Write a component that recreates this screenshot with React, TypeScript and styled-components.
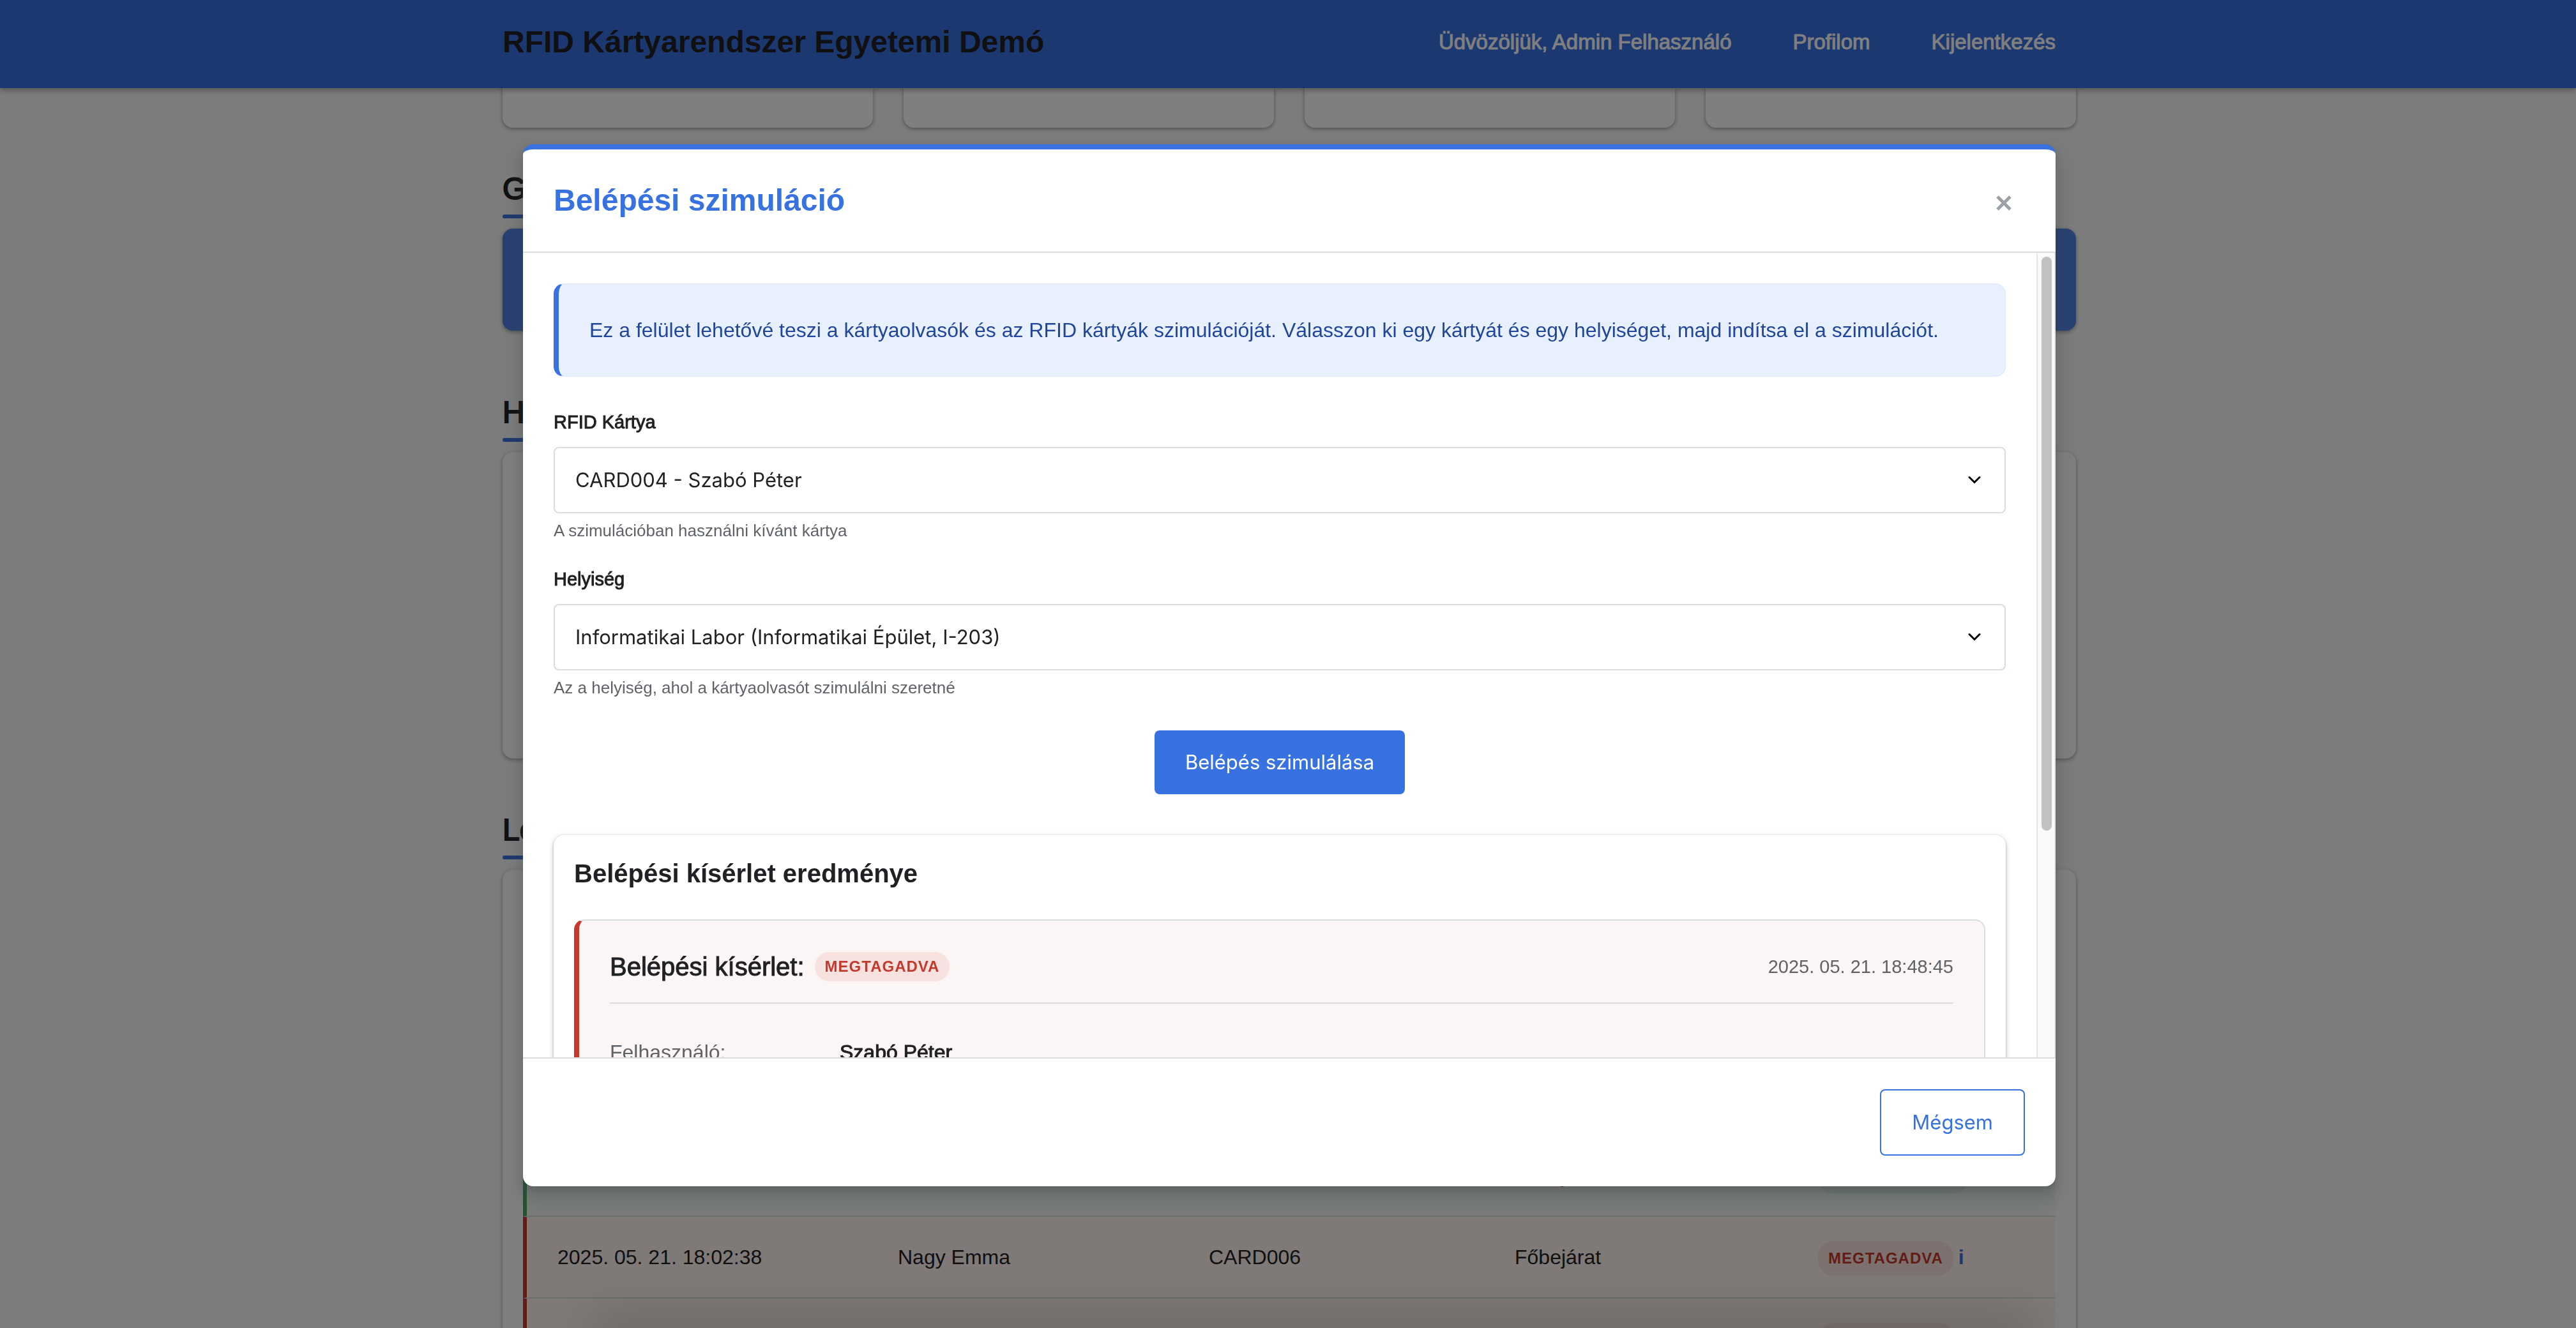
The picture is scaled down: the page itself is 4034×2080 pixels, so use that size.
import React from "react";
import styled, { createGlobalStyle, css } from "styled-components";

const sans = `"Liberation Sans", Arial, sans-serif`;
const ui = `Inter, Roboto, "Liberation Sans", sans-serif`;

const color = {
  primary: "#3871e0",
  text: "#202124",
  muted: "#5f6368",
  line: "#dadce0",
  red: "#c5392c",
  green: "#48a561",
};

const cardShadow = "0 2px 4px rgba(60, 64, 67, 0.3), 0 2px 6px 2px rgba(60, 64, 67, 0.15)";

/* Thickens the regular face to a medium weight. */
const medium = css`
  -webkit-text-stroke: 1px currentColor;
`;

const GlobalStyle = createGlobalStyle`
  *, *::before, *::after { box-sizing: border-box; }
  body {
    margin: 0;
    background: #f8f9fa;
    color: ${color.text};
    font: 32px/48px ${sans};
    overflow: hidden;
  }
  h1, h2, h3, h4, p, dl, dd { margin: 0; }
  button, select { font: inherit; }
`;

const Page = styled.div`
  height: 100vh;
  overflow: hidden;
`;

const Header = styled.header`
  position: relative;
  z-index: 1;
  height: 138px;
  padding: 0 0 6px 4px;
  display: flex;
  align-items: center;
  background: ${color.primary};
  box-shadow: 0 4px 8px rgba(0, 0, 0, 0.3);
`;

const HeaderInner = styled.div`
  flex: 1;
  max-width: 2464px;
  margin: 0 auto;
  padding-right: 32px;
  display: flex;
  align-items: center;
  justify-content: space-between;
`;

const Brand = styled.h1`
  font-size: 48px;
  line-height: 64px;
`;

const Nav = styled.nav`
  display: flex;
  gap: 96px;
  color: #fff;
  font-size: 33px;
  ${medium}
`;

const NavLink = styled.a`
  color: inherit;
  text-decoration: none;
`;

const Container = styled.main`
  padding-left: 4px;
`;

const Column = styled.div`
  max-width: 2464px;
  margin: 0 auto;
`;

const StatGrid = styled.div`
  display: grid;
  grid-template-columns: repeat(4, 1fr);
  gap: 48px;
`;

const StatCard = styled.div`
  height: 62px;
  background: #fff;
  border-radius: 0 0 16px 16px;
  box-shadow: ${cardShadow};
`;

const Section = styled.section<{ $gap: number }>`
  padding-top: ${(p) => p.$gap}px;
`;

const SectionTitle = styled.h2`
  margin-bottom: 16px;
  font-size: 48px;
  font-weight: 400;
  line-height: 64px;
  -webkit-text-stroke: 2px currentColor;

  &::after {
    content: "";
    display: block;
    width: 120px;
    height: 6px;
    margin-top: 8px;
    border-radius: 3px;
    background: ${color.primary};
  }
`;

const Banner = styled.div`
  height: 160px;
  border-radius: 16px;
  background: #4f83e6;
  box-shadow: ${cardShadow};
`;

const Card = styled.div<{ $height?: number }>`
  min-height: ${(p) => p.$height ?? 0}px;
  padding: 32px;
  background: #fff;
  border-radius: 16px;
  box-shadow: ${cardShadow};
`;

const Table = styled.table`
  width: 100%;
  table-layout: fixed;
  border-collapse: separate;
  border-spacing: 0;
`;

const Th = styled.th`
  height: 128px;
  padding: 0 48px;
  text-align: left;
  border-bottom: 2px solid ${color.line};
`;

const Row = styled.tr<{ $denied: boolean }>`
  height: 128px;
  background: ${(p) => (p.$denied ? "#fef2ef" : "#f4faf3")};

  td:first-child {
    border-left: 6px solid ${(p) => (p.$denied ? color.red : color.green)};
  }
`;

const Td = styled.td`
  padding: 0 48px;
  border-bottom: 2px solid ${color.line};
`;

const Status = styled.div`
  display: flex;
  align-items: center;
  gap: 8px;
`;

const Badge = styled.span<{ $denied: boolean; $tall?: boolean }>`
  padding: ${(p) => (p.$tall ? 8 : 4)}px 16px;
  margin-top: ${(p) => (p.$tall ? 4 : 0)}px;
  border-radius: 24px;
  background: ${(p) => (p.$denied ? "#f8e2df" : "#dff0e3")};
  color: ${(p) => (p.$denied ? color.red : color.green)};
  font-size: 24px;
  font-weight: 700;
  line-height: 38px;
  letter-spacing: 1px;
  white-space: nowrap;
`;

const InfoMark = styled.b`
  color: ${color.primary};
`;

const Overlay = styled.div`
  position: fixed;
  inset: 0;
  z-index: 10;
  padding: 4px 0 0 4px;
  display: flex;
  align-items: center;
  justify-content: center;
  background: rgba(0, 0, 0, 0.5);

  &::after {
    content: "";
    position: absolute;
    left: 940px;
    right: 860px;
    bottom: -20px;
    height: 20px;
    box-shadow: 0 0 80px 16px rgba(0, 0, 0, 0.2);
  }
`;

const Dialog = styled.div`
  width: 2400px;
  max-width: 92vw;
  height: calc(100vh - 448px);
  display: flex;
  flex-direction: column;
  overflow: hidden;
  background: #fff;
  border-top: 8px solid ${color.primary};
  border-radius: 16px;
  box-shadow: 0 8px 12px rgba(60, 64, 67, 0.3), 0 16px 24px 12px rgba(60, 64, 67, 0.15);
`;

const DialogHeader = styled.div`
  flex: none;
  padding: 48px;
  display: flex;
  align-items: center;
  justify-content: space-between;
  border-bottom: 2px solid ${color.line};
`;

const DialogTitle = styled.h2`
  color: ${color.primary};
  font-size: 48px;
  line-height: 64px;
`;

const CloseButton = styled.button`
  width: 66px;
  height: 64px;
  padding: 8px 0 0;
  display: grid;
  place-items: center;
  border: 0;
  background: none;
  color: #9aa0a6;
`;

const DialogMain = styled.div`
  flex: 1;
  min-height: 0;
  display: flex;
`;

const DialogBody = styled.div`
  flex: 1;
  min-width: 0;
  padding: 48px;
  overflow-y: auto;
  scrollbar-width: none;
`;

const ScrollTrack = styled.div`
  width: 30px;
  padding: 6px 4px 6px 6px;
  background: #fafafa;
  border: solid #e8e8e8;
  border-width: 0 2px;
`;

const ScrollThumb = styled.div`
  height: 72%;
  border-radius: 8px;
  background: #c1c1c1;
`;

const Notice = styled.p`
  padding: 48px;
  margin-bottom: 48px;
  background: #e8effd;
  border: 1px solid #dbe7fc;
  border-left: 8px solid ${color.primary};
  border-radius: 16px;
  color: #20469b;
`;

const Field = styled.div`
  & + & {
    margin-top: 34px;
  }
`;

const Label = styled.label`
  display: block;
  margin-bottom: 16px;
  font-size: 29px;
  line-height: 46px;
  ${medium}
`;

const SelectBox = styled.div`
  position: relative;
  display: grid;
`;

const Select = styled.select`
  width: 100%;
  height: 104px;
  padding: 0 32px;
  appearance: none;
  background: #fff;
  border: 2px solid ${color.line};
  border-radius: 8px;
  color: ${color.text};
  font-family: ${ui};
  font-size: 31px;
`;

const Chevron = styled.svg`
  position: absolute;
  right: 38px;
  top: 45px;
  pointer-events: none;
`;

const Hint = styled.p`
  margin-top: 8px;
  color: ${color.muted};
  font-size: 26px;
  line-height: 38px;
`;

const Actions = styled.div`
  margin: 48px 0 64px;
  display: flex;
  justify-content: center;
`;

const Button = styled.button<{ $outline?: boolean }>`
  padding: 26px 48px;
  border: ${(p) => (p.$outline ? `2px solid ${color.primary}` : "0")};
  border-radius: 8px;
  background: ${(p) => (p.$outline ? "#fff" : color.primary)};
  color: ${(p) => (p.$outline ? color.primary : "#fff")};
  font-family: ${ui};
  font-size: 31px;
`;

const ResultTitle = styled.h3`
  margin-bottom: 44px;
  font-size: 40px;
  line-height: 56px;
`;

const Attempt = styled.div`
  padding: 48px;
  background: #fbf5f5;
  border: 2px solid ${color.line};
  border-left: 8px solid ${color.red};
  border-radius: 16px;
`;

const AttemptHeader = styled.div`
  padding-bottom: 32px;
  margin-bottom: 48px;
  display: flex;
  align-items: center;
  justify-content: space-between;
  border-bottom: 2px solid ${color.line};
`;

const AttemptTitle = styled.div`
  display: flex;
  align-items: center;
  gap: 16px;
`;

const AttemptName = styled.h4`
  font-size: 40px;
  font-weight: 400;
  line-height: 48px;
  ${medium}
`;

const AttemptTime = styled.time`
  color: ${color.muted};
  font-size: 29px;
`;

const Details = styled.dl`
  display: grid;
  grid-template-columns: 360px 1fr;
  line-height: 56px;

  dt {
    color: ${color.muted};
  }
  dd {
    ${medium}
  }
`;

const DialogFooter = styled.div`
  flex: none;
  padding: 48px;
  display: flex;
  justify-content: flex-end;
  border-top: 2px solid ${color.line};
`;

const rows = [
  { time: "2025. 05. 21. 18:12:45", name: "Kiss János", card: "CARD003", room: "Könyvtár", denied: false },
  { time: "2025. 05. 21. 18:08:12", name: "Tóth Anna", card: "CARD005", room: "Főbejárat", denied: false },
  { time: "2025. 05. 21. 18:04:30", name: "Kovács Béla", card: "CARD002", room: "Főbejárat", denied: false },
  { time: "2025. 05. 21. 18:02:38", name: "Nagy Emma", card: "CARD006", room: "Főbejárat", denied: true },
  { time: "2025. 05. 21. 18:01:10", name: "Nagy Emma", card: "CARD006", room: "Könyvtár", denied: true },
];

function SelectField({ id, label, value, hint }: { id: string; label: string; value: string; hint: string }) {
  return (
    <Field>
      <Label htmlFor={id}>{label}</Label>
      <SelectBox>
        <Select id={id} defaultValue={value}>
          <option>{value}</option>
        </Select>
        <Chevron width="22" height="14" viewBox="0 0 22 14" fill="none" stroke="#000" strokeWidth="3">
          <path d="M3 2.5l8 8 8-8" strokeLinecap="round" />
        </Chevron>
      </SelectBox>
      <Hint>{hint}</Hint>
    </Field>
  );
}

export default function App() {
  return (
    <>
      <GlobalStyle />
      <Page>
        <Header>
          <HeaderInner>
            <Brand>RFID Kártyarendszer Egyetemi Demó</Brand>
            <Nav>
              <span>Üdvözöljük, Admin Felhasználó</span>
              <NavLink href="#profil">Profilom</NavLink>
              <NavLink href="#kijelentkezes">Kijelentkezés</NavLink>
            </Nav>
          </HeaderInner>
        </Header>
        <Container>
          <Column>
            <StatGrid>
              <StatCard />
              <StatCard />
              <StatCard />
              <StatCard />
            </StatGrid>
            <Section $gap={64}>
              <SectionTitle>Gyors műveletek</SectionTitle>
              <Banner />
            </Section>
            <Section $gap={96}>
              <SectionTitle>Helyiségek</SectionTitle>
              <Card $height={480} />
            </Section>
            <Section $gap={80}>
              <SectionTitle>Legutóbbi belépések</SectionTitle>
              <Card>
                <Table>
                  <colgroup>
                    <col width="539" />
                    <col width="487" />
                    <col width="479" />
                    <col width="475" />
                    <col />
                  </colgroup>
                  <thead>
                    <tr>
                      <Th>Időpont</Th>
                      <Th>Felhasználó</Th>
                      <Th>Kártya</Th>
                      <Th>Helyiség</Th>
                      <Th>Státusz</Th>
                    </tr>
                  </thead>
                  <tbody>
                    {rows.map((r) => (
                      <Row key={r.time} $denied={r.denied}>
                        <Td>{r.time}</Td>
                        <Td>{r.name}</Td>
                        <Td>{r.card}</Td>
                        <Td>{r.room}</Td>
                        <Td>
                          <Status>
                            <Badge $denied={r.denied} $tall>
                              {r.denied ? "MEGTAGADVA" : "ENGEDÉLYEZVE"}
                            </Badge>
                            {r.denied && <InfoMark>i</InfoMark>}
                          </Status>
                        </Td>
                      </Row>
                    ))}
                  </tbody>
                </Table>
              </Card>
            </Section>
          </Column>
        </Container>
      </Page>

      <Overlay>
        <Dialog role="dialog" aria-modal="true" aria-labelledby="dialog-title">
          <DialogHeader>
            <DialogTitle id="dialog-title">Belépési szimuláció</DialogTitle>
            <CloseButton type="button" aria-label="Bezárás">
              <svg width="24" height="24" viewBox="0 0 24 24" fill="none" stroke="currentColor" strokeWidth="5">
                <path d="M2 2l20 20M22 2l-20 20" />
              </svg>
            </CloseButton>
          </DialogHeader>
          <DialogMain>
            <DialogBody>
              <Notice>
                Ez a felület lehetővé teszi a kártyaolvasók és az RFID kártyák szimulációját. Válasszon ki egy kártyát
                és egy helyiséget, majd indítsa el a szimulációt.
              </Notice>
              <SelectField
                id="card"
                label="RFID Kártya"
                value="CARD004 - Szabó Péter"
                hint="A szimulációban használni kívánt kártya"
              />
              <SelectField
                id="room"
                label="Helyiség"
                value="Informatikai Labor (Informatikai Épület, I-203)"
                hint="Az a helyiség, ahol a kártyaolvasót szimulálni szeretné"
              />
              <Actions>
                <Button type="button">Belépés szimulálása</Button>
              </Actions>
              <Card>
                <ResultTitle>Belépési kísérlet eredménye</ResultTitle>
                <Attempt>
                  <AttemptHeader>
                    <AttemptTitle>
                      <AttemptName>Belépési kísérlet:</AttemptName>
                      <Badge $denied>MEGTAGADVA</Badge>
                    </AttemptTitle>
                    <AttemptTime>2025. 05. 21. 18:48:45</AttemptTime>
                  </AttemptHeader>
                  <Details>
                    <dt>Felhasználó:</dt>
                    <dd>Szabó Péter</dd>
                    <dt>Kártya:</dt>
                    <dd>CARD004</dd>
                    <dt>Helyiség:</dt>
                    <dd>Informatikai Labor</dd>
                  </Details>
                </Attempt>
              </Card>
            </DialogBody>
            <ScrollTrack>
              <ScrollThumb />
            </ScrollTrack>
          </DialogMain>
          <DialogFooter>
            <Button type="button" $outline>
              Mégsem
            </Button>
          </DialogFooter>
        </Dialog>
      </Overlay>
    </>
  );
}
